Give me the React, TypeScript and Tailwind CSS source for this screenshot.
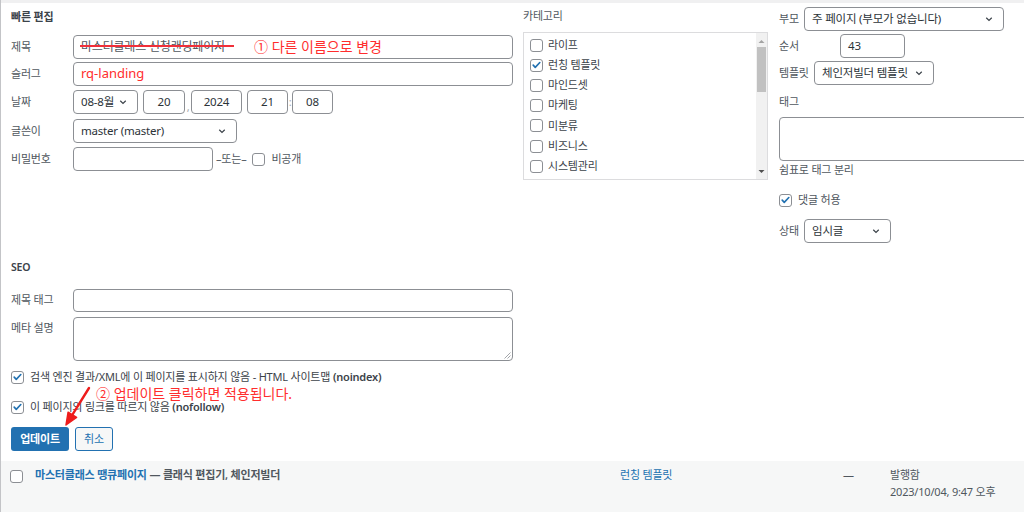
import React from 'react';

const FONT = "font-['Noto_Sans','Noto_Sans_CJK_KR',sans-serif]";

function Box({ checked }: { checked?: boolean }) {
  return (
    <span className="w-[13px] h-[13px] border border-[#8c8f94] rounded-[3px] bg-white flex items-center justify-center shrink-0">
      {checked && (
        <svg viewBox="0 0 16 16" className="w-[12px] h-[12px]">
          <path d="M3.2 8.2l3 3.2 6.6-7" stroke="#2271b1" strokeWidth="2.4" fill="none" strokeLinecap="round" strokeLinejoin="round" />
        </svg>
      )}
    </span>
  );
}

function Chevron() {
  return (
    <svg width="10" height="10" viewBox="0 0 20 20" className="shrink-0">
      <path d="M4.5 7.5l5.5 5.5 5.5-5.5" stroke="#3c434a" strokeWidth="2.4" fill="none" />
    </svg>
  );
}

function Select({ value, className }: { value: string; className: string }) {
  return (
    <div className={`h-[24px] border border-[#8c8f94] rounded-[4px] bg-white flex items-center justify-between pl-[7px] pr-[9px] text-[11.5px] text-[#2c3338] ${className}`}>
      <span className="whitespace-nowrap">{value}</span>
      <Chevron />
    </div>
  );
}

function Field({ value, className }: { value?: string; className: string }) {
  return (
    <div className={`h-[24px] border border-[#8c8f94] rounded-[4px] bg-white flex items-center justify-center text-[11.5px] text-[#2c3338] ${className}`}>
      {value}
    </div>
  );
}

function Grip() {
  return (
    <svg width="7" height="7" viewBox="0 0 7 7" className="absolute right-[1px] bottom-[1px]">
      <path d="M6.5 0.5L0.5 6.5M6.5 3.5L3.5 6.5" stroke="#8c8f94" strokeWidth="0.8" />
    </svg>
  );
}

const categories = [
  { name: '라이프' },
  { name: '런칭 템플릿', checked: true },
  { name: '마인드셋' },
  { name: '마케팅' },
  { name: '미분류' },
  { name: '비즈니스' },
  { name: '시스템관리' },
];

export default function App() {
  return (
    <div className={`w-[1024px] h-[512px] overflow-hidden bg-white border-l border-[#c3c4c7] relative ${FONT} text-[11px] tracking-[-0.2px] text-[#50575e]`}>
      <div className="h-[3px] bg-[#f0f0f1]" />

      {/* Quick edit */}
      <div className="flex">
        {/* Left fieldset */}
        <div className="w-[513px] pl-[10px] pt-[5px] shrink-0">
          <div className="h-[18px] leading-[18px] font-bold text-[#3c434a]">빠른 편집</div>

          <div className="flex items-center h-[24px] mt-[9px]">
            <span className="w-[62px]">제목</span>
            <div className="relative w-[440px] h-[24px] border border-[#8c8f94] rounded-[4px] flex items-center pl-[7px] text-[12px] text-[#50575e]">
              <span className="whitespace-nowrap">마스터클래스 신청랜딩페이지</span>
              <span className="absolute left-[6px] top-[9px] w-[154px] h-[2px] bg-[#f0303a]" />
              <span className="absolute left-[180px] top-[1px] text-[14px] leading-[20px] tracking-normal text-[#ff2d2d] whitespace-nowrap">① 다른 이름으로 변경</span>
            </div>
          </div>

          <div className="flex items-center h-[24px] mt-[3px]">
            <span className="w-[62px]">슬러그</span>
            <div className="w-[440px] h-[24px] border border-[#8c8f94] rounded-[4px] flex items-center pl-[7px] text-[13px] tracking-normal text-[#ff2d2d]">
              rq-landing
            </div>
          </div>

          <div className="flex items-center h-[24px] mt-[4px]">
            <span className="w-[62px]">날짜</span>
            <Select value="08-8월" className="w-[65px]" />
            <span className="w-[5px]" />
            <Field value="20" className="w-[42px]" />
            <span className="w-[6px] text-center text-[#a7aaad] self-end leading-[14px]">,</span>
            <Field value="2024" className="w-[51px]" />
            <span className="w-[5px]" />
            <Field value="21" className="w-[41px]" />
            <span className="w-[4px] text-center text-[#a7aaad]">:</span>
            <Field value="08" className="w-[41px]" />
          </div>

          <div className="flex items-center h-[24px] mt-[5px]">
            <span className="w-[62px]">글쓴이</span>
            <Select value="master (master)" className="w-[164px]" />
          </div>

          <div className="flex items-center h-[24px] mt-[4px]">
            <span className="w-[62px]">비밀번호</span>
            <Field className="w-[140px]" />
            <span className="ml-[3px] whitespace-nowrap">–또는–</span>
            <span className="ml-[6px]"><Box /></span>
            <span className="ml-[6px]">비공개</span>
          </div>
        </div>

        {/* Categories */}
        <div className="w-[245px] ml-[9px] pt-[4px] shrink-0">
          <div className="h-[18px] leading-[18px]">카테고리</div>
          <div className="mt-[7px] h-[148px] border border-[#dcdcde] flex">
            <div className="flex-1 pt-[2px] pl-[6px]">
              {categories.map((c) => (
                <div key={c.name} className="h-[20.2px] flex items-center gap-[5px] text-[#3c434a]">
                  <Box checked={c.checked} />
                  <span>{c.name}</span>
                </div>
              ))}
            </div>
            <div className="w-[11px] bg-[#f1f1f1] flex flex-col items-center">
              <svg width="7" height="10" viewBox="0 0 7 10" className="mt-[3px]">
                <path d="M0.5 7L3.5 4L6.5 7Z" fill="#a3a3a3" />
              </svg>
              <div className="w-[9px] h-[45px] bg-[#c1c1c1] mt-[1px]" />
              <div className="flex-1" />
              <svg width="7" height="10" viewBox="0 0 7 10" className="mb-[2px]">
                <path d="M0.5 3L3.5 6L6.5 3Z" fill="#505050" />
              </svg>
            </div>
          </div>
        </div>

        {/* Right column */}
        <div className="ml-[11px] pt-[4px] shrink-0">
          <div className="flex items-center h-[24px]">
            <span className="w-[25px]">부모</span>
            <Select value="주 페이지 (부모가 없습니다)" className="w-[200px]" />
          </div>
          <div className="flex items-center h-[24px] mt-[3px]">
            <span className="w-[61px]">순서</span>
            <div className="w-[65px] h-[24px] border border-[#8c8f94] rounded-[4px] flex items-center pl-[7px] text-[11.5px] text-[#2c3338]">43</div>
          </div>
          <div className="flex items-center h-[24px] mt-[3px]">
            <span className="w-[35px]">템플릿</span>
            <Select value="체인저빌더 템플릿" className="w-[120px]" />
          </div>
          <div className="h-[18px] leading-[18px] mt-[8px]">태그</div>
          <div className="w-[260px] h-[44px] mt-[6px] border border-[#8c8f94] rounded-[4px]" />
          <div className="h-[18px] leading-[18px]">쉼표로 태그 분리</div>
          <div className="flex items-center gap-[6px] h-[18px] mt-[12px]">
            <Box checked />
            <span>댓글 허용</span>
          </div>
          <div className="flex items-center h-[24px] mt-[10px]">
            <span className="w-[25px]">상태</span>
            <Select value="임시글" className="w-[87px]" />
          </div>
        </div>
      </div>

      {/* SEO */}
      <div className="pl-[10px] relative">
        <div className="h-[18px] leading-[18px] mt-[15px] font-semibold text-[10.5px] text-[#3c434a]">SEO</div>
        <div className="flex items-center h-[23px] mt-[13px]">
          <span className="w-[62px]">제목 태그</span>
          <div className="w-[440px] h-[23px] border border-[#8c8f94] rounded-[4px]" />
        </div>
        <div className="flex items-start mt-[5px]">
          <span className="w-[62px] mt-[3px]">메타 설명</span>
          <div className="relative w-[440px] h-[44px] border border-[#8c8f94] rounded-[4px]">
            <Grip />
          </div>
        </div>
        <div className="flex items-center gap-[6px] h-[18px] mt-[7px] text-[#3c434a]">
          <Box checked />
          <span className="whitespace-nowrap">검색 엔진 결과/XML에 이 페이지를 표시하지 않음 - HTML 사이트맵 <b className="font-semibold">(noindex)</b></span>
        </div>
        <div className="flex items-center gap-[6px] h-[18px] mt-[12px] text-[#3c434a]">
          <Box checked />
          <span className="whitespace-nowrap">이 페이지의 링크를 따르지 않음 <b className="font-semibold">(nofollow)</b></span>
        </div>
        <div className="flex items-center gap-[6px] mt-[11px]">
          <div className="w-[58px] h-[24px] rounded-[3px] bg-[#2271b1] text-white text-[11px] font-semibold flex items-center justify-center">업데이트</div>
          <div className="w-[38px] h-[24px] rounded-[3px] border border-[#2271b1] bg-[#f6f7f7] text-[#2271b1] text-[11px] flex items-center justify-center">취소</div>
        </div>

        <span className="absolute left-[95px] top-[126px] text-[14px] leading-[20px] tracking-normal text-[#ff2d2d] whitespace-nowrap">② 업데이트 클릭하면 적용됩니다.</span>
        <svg width="40" height="46" viewBox="0 0 40 46" className="absolute left-[56px] top-[126px]">
          <path d="M32 4L15.3 30.8" stroke="#ee1c1c" strokeWidth="2.4" strokeLinecap="round" />
          <path d="M9 41L19.6 33.5L11.1 28.2Z" fill="#ee1c1c" stroke="#ee1c1c" strokeWidth="1.5" strokeLinejoin="round" />
        </svg>
      </div>

      {/* List row */}
      <div className="mt-[10px] h-[60px] bg-[#f6f7f7] flex items-start pt-[5px] text-[11px]">
        <span className="ml-[9px] mt-[4px]"><Box /></span>
        <div className="ml-[12px] w-[585px] leading-[18px] whitespace-nowrap">
          <span className="font-semibold text-[#2271b1]">마스터클래스 땡큐페이지</span>
          <span className="font-semibold text-[#50575e]"> — 클래식 편집기, 체인저빌더</span>
        </div>
        <span className="w-[223px] leading-[18px] text-[#2271b1]">런칭 템플릿</span>
        <span className="w-[47px] leading-[18px] text-[#50575e]">—</span>
        <div className="leading-[18px] text-[#50575e]">
          <div>발행함</div>
          <div className="mt-[-1px] whitespace-nowrap">2023/10/04, 9:47 오후</div>
        </div>
      </div>
    </div>
  );
}
